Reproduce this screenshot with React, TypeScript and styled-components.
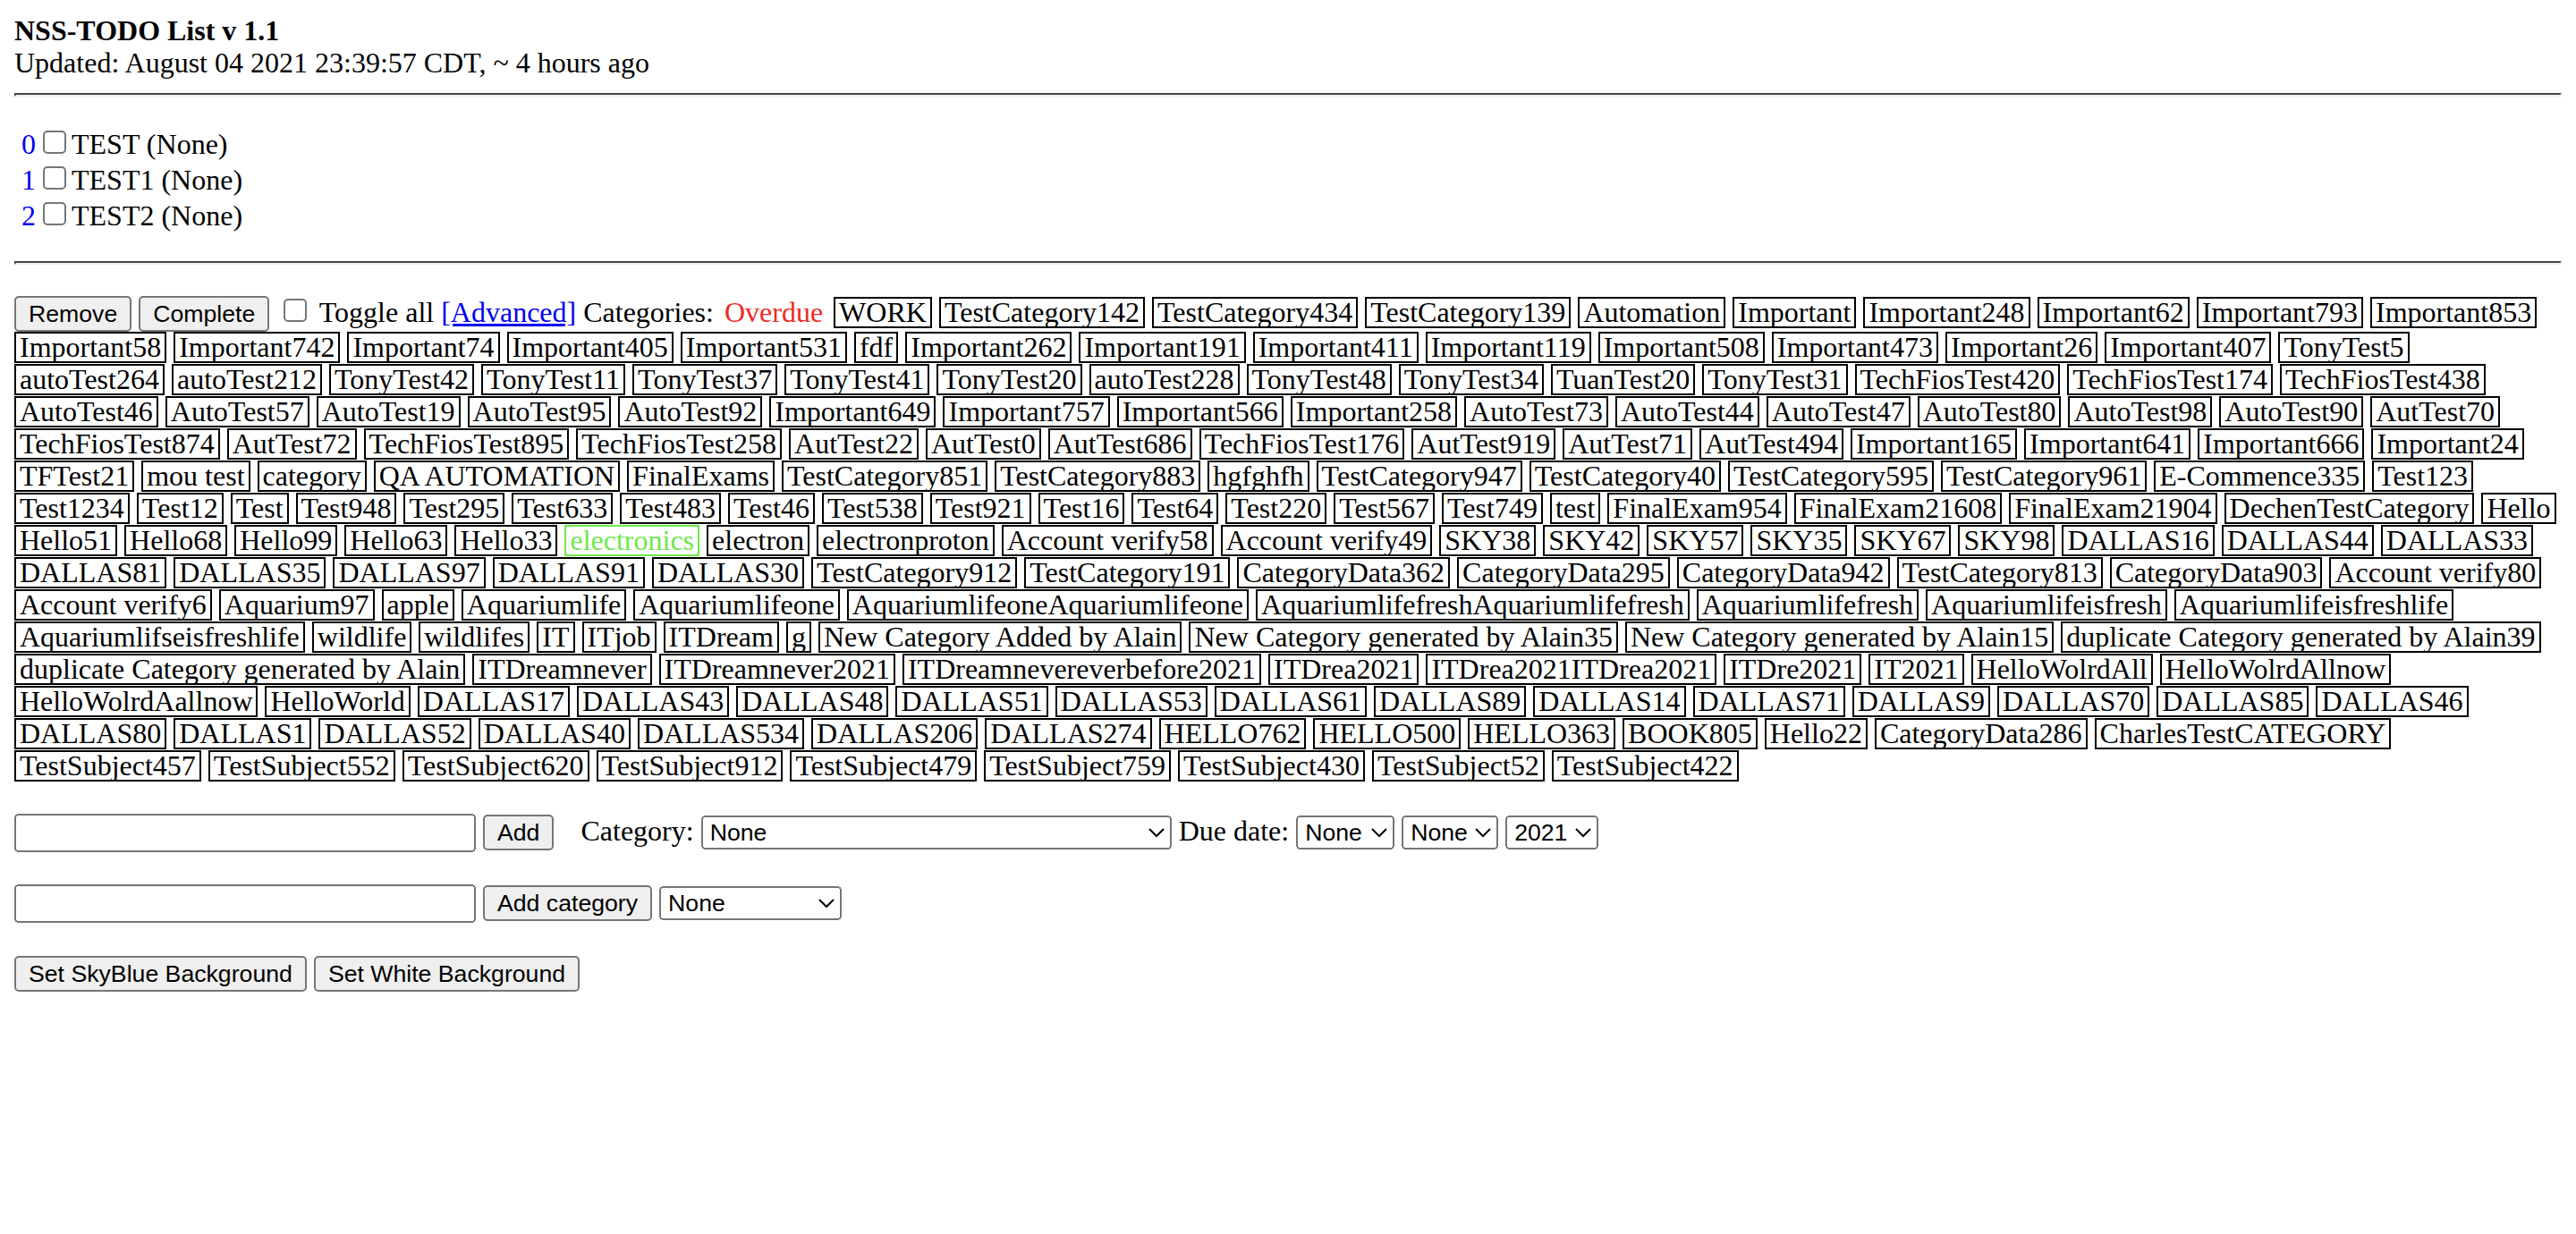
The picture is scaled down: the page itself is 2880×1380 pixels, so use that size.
import React from "react";
import styled, { createGlobalStyle } from "styled-components";

const Global = createGlobalStyle`
  html { zoom: 2; }
  body {
    margin: 8px;
    background: #fff;
    color: #000;
    font-family: "Liberation Serif", "Times New Roman", serif;
    font-size: 16px;
  }
`;

const Header = styled.div`
  line-height: 18px;
`;

const Title = styled.b`
  font-weight: bold;
`;

const Rule = styled.hr`
  margin: 8px 0;
  border: 1px inset #eee;
  border-top-color: #9a9a9a;
  border-left-color: #9a9a9a;
  height: 0;
`;

const TodoList = styled.div`
  margin: 16px 0;
`;

const TodoItem = styled.div`
  line-height: 20px;
  height: 20px;
`;

const Index = styled.span`
  margin-left: 4px;
  color: #0000ee;
`;

const Check = styled.input.attrs({ type: "checkbox" })`
  margin: 3px 3px 3px 4px;
  width: 13px;
  height: 13px;
  vertical-align: baseline;
`;

const TagBlock = styled.div`
  margin: 16px 0;
  line-height: 18px;
`;

const TagLine = styled.div<{ $first?: boolean }>`
  white-space: nowrap;
  height: ${(p) => (p.$first ? "21.2px" : "18px")};
`;

const Btn = styled.button`
  font-family: "Liberation Sans", Arial, sans-serif;
  font-size: 13.333px;
  line-height: 14px;
  padding: 1px 6px;
  margin: 0;
  color: #000;
`;

const AdvLink = styled.a`
  color: #0000ee;
  text-decoration: underline;
`;

const Tag = styled.span<{ $tone?: "overdue" | "green" }>`
  display: inline-block;
  white-space: nowrap;
  line-height: 15.5px;
  padding: 0 ${(p) => (p.$tone === "overdue" ? "1px" : "2px")};
  border: 1px solid
    ${(p) => (p.$tone === "overdue" ? "transparent" : p.$tone === "green" ? "#6ee84a" : "#000")};
  color: ${(p) => (p.$tone === "overdue" ? "#ee2a24" : p.$tone === "green" ? "#6ee84a" : "#000")};
`;

const FormRow = styled.div`
  margin: 16px 0;
  line-height: 23px;
`;

const TextField = styled.input.attrs({ type: "text" })`
  box-sizing: border-box;
  width: 258px;
  font-family: "Liberation Sans", Arial, sans-serif;
  font-size: 13.333px;
  margin: 0;
`;

const Select = styled.select<{ $w: number }>`
  box-sizing: border-box;
  width: ${(p) => p.$w}px;
  font-family: "Liberation Sans", Arial, sans-serif;
  font-size: 13.333px;
  margin: 0;
  color: #000;
`;

const Label = styled.span<{ $gap?: number }>`
  margin-left: ${(p) => p.$gap ?? 0}px;
`;

const rows: string[][] = [
  ["WORK", "TestCategory142", "TestCategory434", "TestCategory139", "Automation", "Important", "Important248", "Important62", "Important793", "Important853"],
  ["Important58", "Important742", "Important74", "Important405", "Important531", "fdf", "Important262", "Important191", "Important411", "Important119", "Important508", "Important473", "Important26", "Important407", "TonyTest5"],
  ["autoTest264", "autoTest212", "TonyTest42", "TonyTest11", "TonyTest37", "TonyTest41", "TonyTest20", "autoTest228", "TonyTest48", "TonyTest34", "TuanTest20", "TonyTest31", "TechFiosTest420", "TechFiosTest174", "TechFiosTest438"],
  ["AutoTest46", "AutoTest57", "AutoTest19", "AutoTest95", "AutoTest92", "Important649", "Important757", "Important566", "Important258", "AutoTest73", "AutoTest44", "AutoTest47", "AutoTest80", "AutoTest98", "AutoTest90", "AutTest70"],
  ["TechFiosTest874", "AutTest72", "TechFiosTest895", "TechFiosTest258", "AutTest22", "AutTest0", "AutTest686", "TechFiosTest176", "AutTest919", "AutTest71", "AutTest494", "Important165", "Important641", "Important666", "Important24"],
  ["TFTest21", "mou test", "category", "QA AUTOMATION", "FinalExams", "TestCategory851", "TestCategory883", "hgfghfh", "TestCategory947", "TestCategory40", "TestCategory595", "TestCategory961", "E-Commence335", "Test123"],
  ["Test1234", "Test12", "Test", "Test948", "Test295", "Test633", "Test483", "Test46", "Test538", "Test921", "Test16", "Test64", "Test220", "Test567", "Test749", "test", "FinalExam954", "FinalExam21608", "FinalExam21904", "DechenTestCategory", "Hello"],
  ["Hello51", "Hello68", "Hello99", "Hello63", "Hello33", "electronics", "electron", "electronproton", "Account verify58", "Account verify49", "SKY38", "SKY42", "SKY57", "SKY35", "SKY67", "SKY98", "DALLAS16", "DALLAS44", "DALLAS33"],
  ["DALLAS81", "DALLAS35", "DALLAS97", "DALLAS91", "DALLAS30", "TestCategory912", "TestCategory191", "CategoryData362", "CategoryData295", "CategoryData942", "TestCategory813", "CategoryData903", "Account verify80"],
  ["Account verify6", "Aquarium97", "apple", "Aquariumlife", "Aquariumlifeone", "AquariumlifeoneAquariumlifeone", "AquariumlifefreshAquariumlifefresh", "Aquariumlifefresh", "Aquariumlifeisfresh", "Aquariumlifeisfreshlife"],
  ["Aquariumlifseisfreshlife", "wildlife", "wildlifes", "IT", "ITjob", "ITDream", "g", "New Category Added by Alain", "New Category generated by Alain35", "New Category generated by Alain15", "duplicate Category generated by Alain39"],
  ["duplicate Category generated by Alain", "ITDreamnever", "ITDreamnever2021", "ITDreamnevereverbefore2021", "ITDrea2021", "ITDrea2021ITDrea2021", "ITDre2021", "IT2021", "HelloWolrdAll", "HelloWolrdAllnow"],
  ["HelloWolrdAallnow", "HelloWorld", "DALLAS17", "DALLAS43", "DALLAS48", "DALLAS51", "DALLAS53", "DALLAS61", "DALLAS89", "DALLAS14", "DALLAS71", "DALLAS9", "DALLAS70", "DALLAS85", "DALLAS46"],
  ["DALLAS80", "DALLAS1", "DALLAS52", "DALLAS40", "DALLAS534", "DALLAS206", "DALLAS274", "HELLO762", "HELLO500", "HELLO363", "BOOK805", "Hello22", "CategoryData286", "CharlesTestCATEGORY"],
  ["TestSubject457", "TestSubject552", "TestSubject620", "TestSubject912", "TestSubject479", "TestSubject759", "TestSubject430", "TestSubject52", "TestSubject422"],
];

const allTags = rows.flat();
const todos = ["TEST", "TEST1", "TEST2"];

function renderTags(list: string[]) {
  return list.map((t, i) => (
    <React.Fragment key={i}>
      <Tag $tone={t === "electronics" ? "green" : undefined}>{t}</Tag>{" "}
    </React.Fragment>
  ));
}

export default function App() {
  return (
    <>
      <Global />
      <Header>
        <Title>NSS-TODO List v 1.1</Title>
        <br />
        Updated: August 04 2021 23:39:57 CDT, ~ 4 hours ago
      </Header>
      <Rule />
      <TodoList>
        {todos.map((t, i) => (
          <TodoItem key={t}>
            <Index>{i}</Index>
            <Check />
            {t} (None)
          </TodoItem>
        ))}
      </TodoList>
      <Rule />
      <TagBlock>
        {rows.map((row, r) => (
          <TagLine key={r} $first={r === 0}>
            {r === 0 && (
              <>
                <Btn>Remove</Btn> <Btn>Complete</Btn> <Check /> Toggle all{" "}
                <AdvLink href="#">[Advanced]</AdvLink> Categories: <Tag $tone="overdue">Overdue</Tag>{" "}
              </>
            )}
            {renderTags(row)}
          </TagLine>
        ))}
      </TagBlock>
      <FormRow>
        <TextField /> <Btn>Add</Btn> <Label $gap={11}>Category:</Label>{" "}
        <Select $w={263} defaultValue="None">
          <option>None</option>
          {allTags.map((t, i) => (
            <option key={i}>{t}</option>
          ))}
        </Select>{" "}
        Due date:{" "}
        <Select $w={55} defaultValue="None">
          <option>None</option>
        </Select>{" "}
        <Select $w={54} defaultValue="None">
          <option>None</option>
        </Select>{" "}
        <Select $w={52} defaultValue="2021">
          <option>2021</option>
        </Select>
      </FormRow>
      <FormRow>
        <TextField /> <Btn>Add category</Btn>{" "}
        <Select $w={102} defaultValue="None">
          <option>None</option>
        </Select>
      </FormRow>
      <FormRow>
        <Btn>Set SkyBlue Background</Btn> <Btn>Set White Background</Btn>
      </FormRow>
    </>
  );
}
